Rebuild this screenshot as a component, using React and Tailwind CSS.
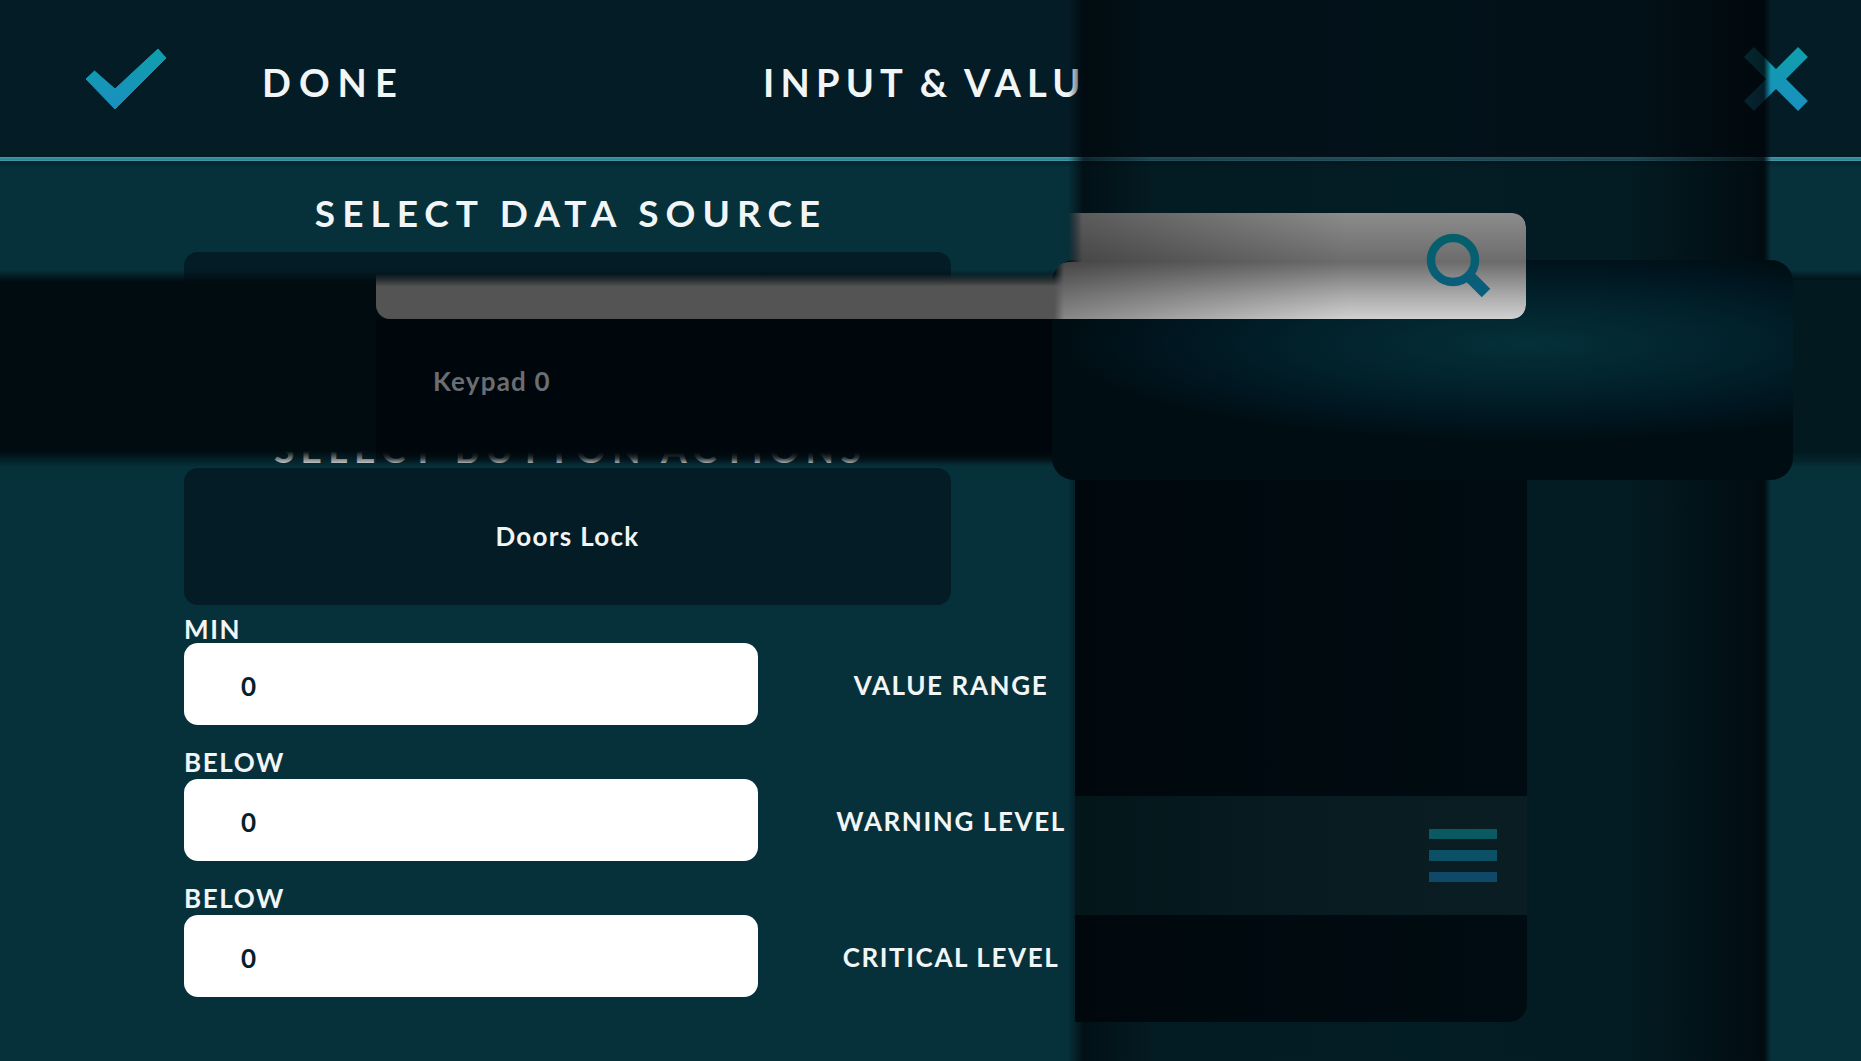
import React from "react";

function CheckIcon() {
  return (
    <svg width="84" height="64" viewBox="0 0 84 64" className="mt-[3px]">
      <defs>
        <linearGradient id="checkGrad" x1="0" y1="0" x2="0" y2="1">
          <stop offset="0" stopColor="#0f9fab" />
          <stop offset="1" stopColor="#1a8fc0" />
        </linearGradient>
      </defs>
      <path
        d="M9.5 23 L1 31 L30 61 L81 10 L73 1 L30 41 Z"
        fill="url(#checkGrad)"
        stroke="url(#checkGrad)"
        strokeWidth="1"
        strokeLinejoin="round"
      />
    </svg>
  );
}

function CloseIcon() {
  return (
    <svg width="66" height="66" viewBox="0 0 66 66">
      <defs>
        <linearGradient id="closeGrad" x1="0" y1="0" x2="0" y2="66" gradientUnits="userSpaceOnUse">
          <stop offset="0" stopColor="#0f9fab" />
          <stop offset="1" stopColor="#1a8fc0" />
        </linearGradient>
      </defs>
      <path
        d="M6 6 L60 60 M60 6 L6 60"
        stroke="url(#closeGrad)"
        strokeWidth="14"
        strokeLinecap="butt"
        fill="none"
      />
    </svg>
  );
}

function SearchIcon() {
  return (
    <svg width="68" height="68" viewBox="0 0 68 68">
      <defs>
        <linearGradient id="searchGrad" x1="0" y1="0" x2="0" y2="68" gradientUnits="userSpaceOnUse">
          <stop offset="0" stopColor="#045f68" />
          <stop offset="1" stopColor="#0a5e80" />
        </linearGradient>
      </defs>
      <circle cx="28" cy="28" r="22" fill="none" stroke="url(#searchGrad)" strokeWidth="8.5" />
      <path d="M43 43 L61 61" stroke="url(#searchGrad)" strokeWidth="12" fill="none" />
    </svg>
  );
}

function SectionBox({ children }) {
  return (
    <div className="w-[767px] h-[137px] rounded-[14px] bg-[#041c26] flex items-center justify-center text-[26px] font-bold tracking-[1.3px] text-[#f2f5f6]">
      {children}
    </div>
  );
}

function ValueRow({ label, name, labelGap }) {
  return (
    <div className="flex flex-col">
      <div className={`h-[28px] leading-[28px] text-[26px] font-bold tracking-[1.6px] text-[#f2f5f6] ${labelGap}`}>
        {label}
      </div>
      <div className="flex items-center">
        <input
          readOnly
          value="0"
          className="w-[574px] h-[82px] rounded-[14px] bg-white pl-[57px] pt-[3px] text-[26px] font-bold text-[#03202c] outline-none"
        />
        <div className="w-[386px] text-center whitespace-nowrap text-[26px] font-bold tracking-[1.6px] text-[#f2f5f6] pt-[3px]">
          {name}
        </div>
      </div>
    </div>
  );
}

export default function App() {
  return (
    <div className="relative w-[1861px] h-[1061px] overflow-hidden bg-[#06303a] font-[Lato,sans-serif]">
      {/* top bar */}
      <header className="h-[157px] flex items-center bg-[#041c26] pl-[85px]">
        <CheckIcon />
        <div className="ml-[93px] w-[501px] mt-[7px] text-[38px] font-bold tracking-[8px] text-[#f2f5f6]">DONE</div>
        <div className="w-[318px] mt-[7px] overflow-hidden whitespace-nowrap text-[38px] font-bold tracking-[6.2px] [word-spacing:-3.5px] text-[#f2f5f6]">
          INPUT &amp; VALUE
        </div>
        <div className="ml-[662px]">
          <CloseIcon />
        </div>
      </header>
      <div className="h-[4px] bg-[linear-gradient(180deg,#3f93a5_0%,#3f93a5_35%,#1d5c6b_50%,#3f97a8_70%,#3f97a8_100%)]" />
      <div className="h-[6px] bg-[linear-gradient(180deg,#03242c,#06303a)]" />

      {/* form */}
      <main className="pl-[184px] pt-[23px] flex flex-col">
        <h2 className="w-[767px] h-[46px] pl-[7px] leading-[46px] mb-[16px] text-center text-[37px] font-bold tracking-[7px] text-[#f2f5f6]">
          SELECT DATA SOURCE
        </h2>
        <SectionBox />
        <h2 className="w-[767px] h-[42px] pl-[6px] leading-[46px] mt-[37px] text-center text-[37px] font-bold tracking-[6.4px] text-[#f2f5f6]">
          SELECT BUTTON ACTIONS
        </h2>
        <SectionBox>Doors Lock</SectionBox>
        <div className="mt-[10px] flex flex-col gap-[23px]">
          <ValueRow label="MIN" name="VALUE RANGE" labelGap="" />
          <ValueRow label="BELOW" name="WARNING LEVEL" labelGap="mb-[3px]" />
          <ValueRow label="BELOW" name="CRITICAL LEVEL" labelGap="mb-[3px]" />
        </div>
      </main>

      {/* vertical band of the opening dialog */}
      <div className="absolute left-[1068px] top-0 bottom-0 w-[703px] bg-[linear-gradient(90deg,rgba(0,0,0,0)_0%,rgba(0,6,10,0.75)_2.2%,rgba(0,6,10,0.5)_12%,rgba(0,6,10,0.45)_50%,rgba(0,6,10,0.5)_80%,rgba(0,4,8,0.82)_99%,rgba(0,0,0,0)_100%)]" />

      {/* horizontal band */}
      <div className="absolute left-0 right-0 top-[270px] h-[197px] bg-[linear-gradient(180deg,rgba(0,12,16,0)_0%,rgba(0,12,16,1)_6%,rgba(0,12,16,1)_92%,rgba(0,12,16,0.35)_97%,rgba(0,12,16,0)_100%)]" />
      <div className="absolute left-[1793px] right-0 top-[280px] h-[180px] bg-[#03252d]/50" />

      {/* list panel */}
      <div className="absolute left-[376px] top-[319px] w-[699px] h-[145px] bg-[linear-gradient(180deg,#00070c_0%,#00070c_90%,rgba(0,7,12,0.55)_96%,rgba(0,7,12,0)_100%)]" />
      <div className="absolute left-[1075px] top-[319px] w-[452px] h-[703px] rounded-br-[18px] bg-[linear-gradient(90deg,#00080d,#000c12)] flex flex-col justify-end">
        <div className="h-[119px] mb-[107px] bg-[linear-gradient(90deg,#03161a,#081c22_60%,#0a1d22)] flex items-center justify-end pr-[30px]">
          <div className="w-[68px] flex flex-col gap-[11px]">
            <div className="h-[10.5px] bg-[#0b5a62]" />
            <div className="h-[10.5px] bg-[#0c5066]" />
            <div className="h-[10.5px] bg-[#0e4a68]" />
          </div>
        </div>
      </div>

      {/* centre card, sits behind the search bar */}
      <div className="absolute left-[1052px] top-[260px] w-[741px] h-[220px] rounded-[22px] bg-[#000d12] bg-[radial-gradient(ellipse_480px_100px_at_64%_38%,#04303a_0%,#02222b_45%,#001620_75%,#000d12_100%)]" />

      {/* search bar, dim part then bright part */}
      <div className="absolute left-[376px] top-[274px] w-[690px] h-[45px] rounded-bl-[14px] bg-[linear-gradient(180deg,rgba(84,84,84,0)_0%,#545454_28%,#545454_100%)]" />
      <div className="absolute left-[1068px] top-[213px] w-[458px] h-[49px] rounded-tr-[14px] bg-[linear-gradient(90deg,rgba(0,0,0,0.36),rgba(0,0,0,0)_280px),linear-gradient(180deg,#8c8c8c,#6c6c6c)] [mask-image:linear-gradient(90deg,transparent,black_14px)]" />
      <div className="absolute left-[1054px] top-[262px] w-[472px] h-[57px] rounded-tl-[14px] rounded-br-[14px] bg-[linear-gradient(90deg,rgba(0,0,0,0.36),rgba(0,0,0,0)_294px),linear-gradient(180deg,#6c6c6c_0%,#a8a8a8_56%,#d0d0d0_100%)] [mask-image:linear-gradient(90deg,transparent,black_10px)]" />
      <div className="absolute left-[1075px] top-[213px] w-[451px] h-[106px] flex items-center justify-end pr-[33px]">
        <SearchIcon />
      </div>

      <div className="absolute left-[433px] top-[363px] text-[26px] leading-[36px] font-bold tracking-[1.2px] text-[#6a6d72]">
        Keypad 0
      </div>
    </div>
  );
}
